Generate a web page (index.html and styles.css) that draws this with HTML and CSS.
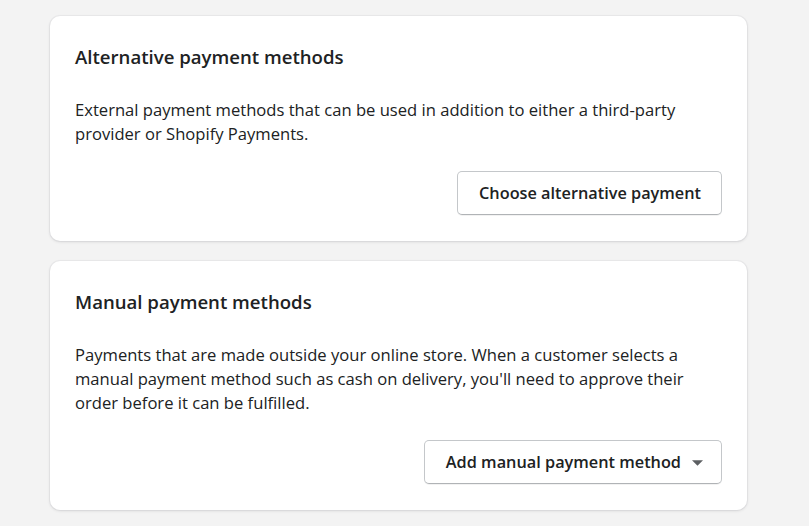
FILE: index.html
```html
<!DOCTYPE html>
<html lang="en">
<head>
<meta charset="utf-8">
<title>Payment methods</title>
<link rel="stylesheet" href="styles.css">
</head>
<body>
<main class="page">
  <section class="card">
    <h2 class="card-title">Alternative payment methods</h2>
    <p class="card-text">External payment methods that can be used in addition to either a third-party provider or Shopify Payments.</p>
    <div class="card-actions">
      <button class="btn" type="button">Choose alternative payment</button>
    </div>
  </section>
  <section class="card">
    <h2 class="card-title">Manual payment methods</h2>
    <p class="card-text">Payments that are made outside your online store. When a customer selects a manual payment method such as cash on delivery, you'll need to approve their order before it can be fulfilled.</p>
    <div class="card-actions">
      <button class="btn btn-menu" type="button">Add manual payment method
        <svg class="caret" width="11" height="6" viewBox="0 0 11 6" aria-hidden="true"><path d="M0 0.3h11L5.5 5.8z" fill="#5c5f62"/></svg>
      </button>
    </div>
  </section>
</main>
</body>
</html>
```

FILE: styles.css
```css
* { box-sizing: border-box; }
html, body { margin: 0; padding: 0; }
body {
  background: #f3f3f3;
  font-family: "Open Sans", "Noto Sans", "Liberation Sans", sans-serif;
  color: #202223;
  width: 809px;
  height: 526px;
  overflow: hidden;
}
.page {
  padding: 16px 62px 0 50px;
  display: flex;
  flex-direction: column;
  gap: 20px;
}
.card {
  background: #fff;
  border-radius: 10px;
  box-shadow: 0 0 0 1px rgba(63,63,68,0.04), 0 1px 3px rgba(63,63,68,0.15);
  padding: 25px 25px 26px 25px;
  display: flex;
  flex-direction: column;
  gap: 25px;
}
.card-title {
  margin: 0;
  font-size: 18.6px;
  font-weight: 600;
  line-height: 32px;
}
.card-text {
  margin: 0;
  font-size: 16.6px;
  line-height: 24px;
  font-weight: 400;
}
.card-actions {
  display: flex;
  justify-content: flex-end;
}
.btn {
  height: 44px;
  padding: 0 20px 0 21px;
  background: #fff;
  border: 1px solid #c4c7ca;
  border-bottom-color: #b0b3b6;
  border-radius: 5px;
  font-family: inherit;
  font-size: 16.3px;
  font-weight: 600;
  color: #202223;
  display: inline-flex;
  align-items: center;
  gap: 11px;
  box-shadow: 0 1px 0 rgba(0,0,0,0.05);
}
.btn-menu { padding: 0 18px 0 21px; }
.caret { display: block; margin-top: 1px; }
```
